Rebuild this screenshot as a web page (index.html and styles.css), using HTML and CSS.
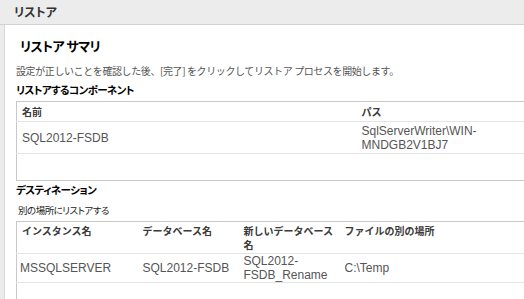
FILE: index.html
```html
<!DOCTYPE html>
<html lang="ja">
<head>
<meta charset="utf-8">
<title>リストア</title>
<link rel="stylesheet" href="styles.css">
</head>
<body>
<div class="page">
  <div class="topbar"><span class="topbar-title">リストア</span></div>
  <div class="main">
    <h1 class="title">リストア サマリ</h1>
    <p class="desc">設定が正しいことを確認した後、[完了] をクリックしてリストア プロセスを開始します。</p>
    <h2 class="section">リストアするコンポーネント</h2>
    <table class="grid grid-comp">
      <colgroup><col class="c-name"><col class="c-path"></colgroup>
      <thead>
        <tr class="hrow"><th class="p5">名前</th><th class="p4">パス</th></tr>
      </thead>
      <tbody>
        <tr class="drow1"><td class="p5">SQL2012-FSDB</td><td class="p4">SqlServerWriter\WIN-MNDGB2V1BJ7</td></tr>
        <tr class="erow1"><td></td><td></td></tr>
      </tbody>
    </table>
    <h2 class="section section-dest">デスティネーション</h2>
    <p class="sub">別の場所にリストアする</p>
    <table class="grid grid-dest">
      <colgroup><col class="c1"><col class="c2"><col class="c3"><col class="c4"></colgroup>
      <thead>
        <tr class="hrow2"><th class="p5">インスタンス名</th><th class="p4">データベース名</th><th class="p4">新しいデータベース名</th><th class="p4">ファイルの別の場所</th></tr>
      </thead>
      <tbody>
        <tr class="drow2"><td class="p3">MSSQLSERVER</td><td class="p4">SQL2012-FSDB</td><td class="p4 small">SQL2012-FSDB_Rename</td><td class="p4 small">C:\Temp</td></tr>
        <tr class="erow2"><td></td><td></td><td></td><td></td></tr>
      </tbody>
    </table>
  </div>
</div>
</body>
</html>
```
FILE: styles.css
```css
html, body {
  margin: 0;
  padding: 0;
  width: 524px;
  height: 299px;
  overflow: hidden;
  background: #ececec;
  font-family: "Liberation Sans", "Noto Sans CJK JP", sans-serif;
}
.page {
  display: flex;
  flex-direction: column;
  height: 299px;
}
.topbar {
  height: 24px;
  border-bottom: 1px solid #d2d2d2;
  background: #ececec;
  display: flex;
  align-items: center;
  padding-left: 14px;
  flex: none;
}
.topbar-title {
  font-family: "Noto Sans CJK JP", sans-serif;
  font-feature-settings: "palt";
  font-size: 12px;
  font-weight: bold;
  color: #333;
  line-height: 16px;
}
.main {
  flex: 1;
  margin-left: 4px;
  border-left: 1px solid #d8d8d8;
  background: #fff;
  padding-left: 11px;
  overflow: hidden;
}
.title {
  margin: 11px 0 0 4px;
  font-family: "Noto Sans CJK JP", sans-serif;
  font-feature-settings: "palt";
  font-size: 13px;
  letter-spacing: -0.6px;
  font-weight: bold;
  line-height: 20px;
  color: #000;
}
.desc {
  margin: 8px 0 0 0;
  font-family: "Noto Sans CJK JP", sans-serif;
  font-size: 10px;
  letter-spacing: -0.4px;
  line-height: 14px;
  color: #555;
  white-space: nowrap;
}
.section {
  margin: 5px 0 0 0;
  font-family: "Noto Sans CJK JP", sans-serif;
  font-feature-settings: "palt";
  font-size: 10.5px;
  letter-spacing: -0.6px;
  font-weight: bold;
  line-height: 14px;
  color: #000;
}
.section-dest {
  margin-top: 2px;
}
.sub {
  margin: 6px 0 0 2px;
  font-family: "Noto Sans CJK JP", sans-serif;
  font-feature-settings: "palt";
  font-size: 9.5px;
  letter-spacing: -0.5px;
  line-height: 14px;
  color: #222;
}
.grid {
  margin-top: 4px;
  border-collapse: collapse;
  table-layout: fixed;
  border: 1px solid #c8c8c8;
  color: #555;
}
.grid th {
  font-family: "Noto Sans CJK JP", sans-serif;
  font-size: 10px;
  font-weight: bold;
  color: #3a3a3a;
  text-align: left;
  line-height: 14px;
  padding-top: 0;
  padding-bottom: 0;
}
.grid td {
  font-size: 12px;
  line-height: 14px;
  padding-top: 0;
  padding-bottom: 0;
  padding-right: 4px;
}
.grid thead tr th {
  border-bottom: 1px solid #e4e4e4;
}
.p3 { padding-left: 3px; }
.p4 { padding-left: 4px; }
.p5 { padding-left: 5px; }
.grid-comp { width: 511px; }
.c-name { width: 341px; }
.c-path { width: 170px; }
.hrow th { height: 19px; }
.drow1 td { height: 31px; border-bottom: 1px solid #e4e4e4; }
.erow1 td { height: 26px; }
.grid-dest { width: 540px; }
.c1 { width: 122px; }
.c2 { width: 101px; }
.c3 { width: 101px; }
.c4 { width: 216px; }
.hrow2 th {
  height: 32px;
  vertical-align: top;
  padding-top: 2px;
  padding-right: 4px;
  box-sizing: border-box;
}
.drow2 td { height: 28px; border-bottom: 1px solid #e4e4e4; }
.erow2 td { height: 40px; }
.small { font-size: 10px; line-height: 13px; }
```
